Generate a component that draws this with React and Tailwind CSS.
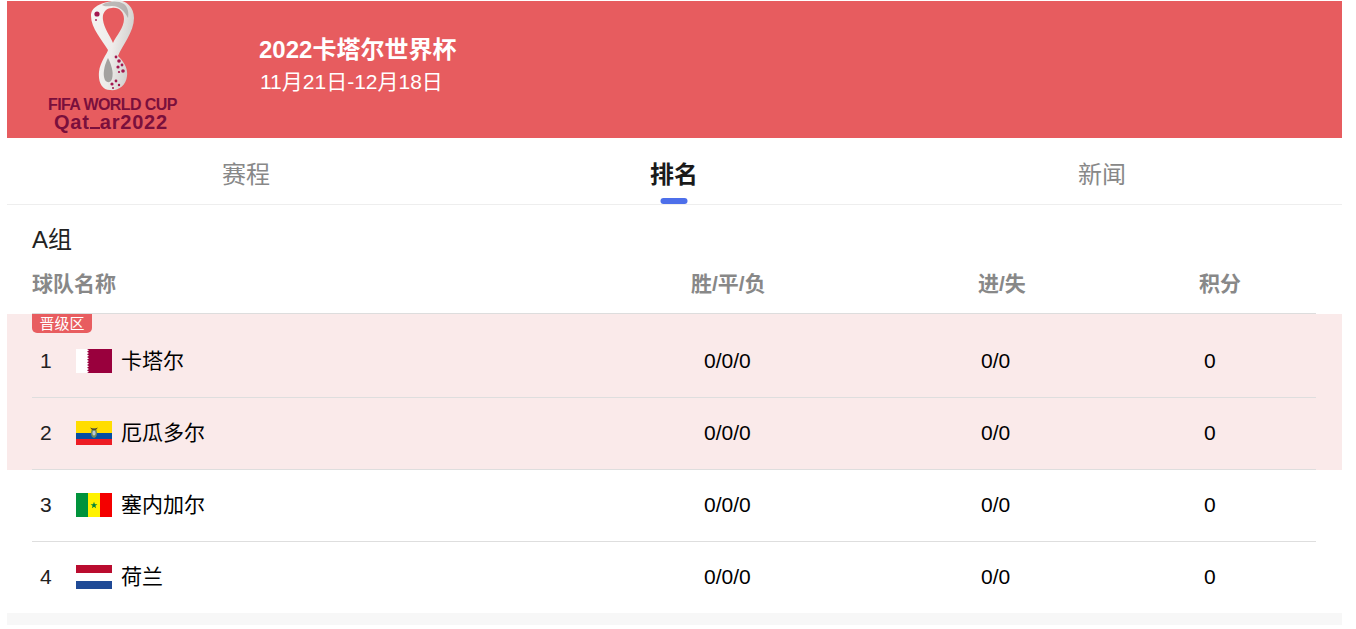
const teams = [
  { rank: 1, name: '卡塔尔', flag: 'qatar', zone: true },
  { rank: 2, name: '厄瓜多尔', flag: 'ecuador', zone: true },
  { rank: 3, name: '塞内加尔', flag: 'senegal' },
  { rank: 4, name: '荷兰', flag: 'netherlands' },
];

function Flag({ type }) {
  return (
    <svg width="36" height="24" viewBox="0 0 36 24" className="shrink-0">
      {type === 'qatar' && (
        <>
          <rect width="36" height="24" fill="#99003d" />
          <path d="M0 0H11L13 1.3L11 2.7L13 4L11 5.3L13 6.7L11 8L13 9.3L11 10.7L13 12L11 13.3L13 14.7L11 16L13 17.3L11 18.7L13 20L11 21.3L13 22.7L11 24H0Z" fill="#fff" />
        </>
      )}
      {type === 'ecuador' && (
        <>
          <rect width="36" height="12" fill="#ffdd00" />
          <rect y="12" width="36" height="6" fill="#034ea2" />
          <rect y="18" width="36" height="6" fill="#ed1c24" />
          <ellipse cx="18" cy="12" rx="3" ry="5" fill="#6f8a5a" />
          <ellipse cx="18" cy="12" rx="1.6" ry="2.6" fill="#b9c9d8" />
          <path d="M14 6.5L18 8L22 6.5L20 8.8H16Z" fill="#4a3b22" />
        </>
      )}
      {type === 'senegal' && (
        <>
          <rect width="12" height="24" fill="#00933c" />
          <rect x="12" width="12" height="24" fill="#fff200" />
          <rect x="24" width="12" height="24" fill="#f40000" />
          <path d="M18 8.8L18.9 11.2H21.4L19.4 12.8L20.1 15.2L18 13.8L15.9 15.2L16.6 12.8L14.6 11.2H17.1Z" fill="#00833a" />
        </>
      )}
      {type === 'netherlands' && (
        <>
          <rect width="36" height="8" fill="#ba0c2f" />
          <rect y="8" width="36" height="8" fill="#fff" />
          <rect y="16" width="36" height="8" fill="#1f4a96" />
        </>
      )}
    </svg>
  );
}

function Trophy() {
  return (
    <svg width="44" height="92" viewBox="91 0 44 92" className="block">
      <defs>
        <linearGradient id="band" x1="0" y1="0" x2="1" y2="0.3">
          <stop offset="0" stopColor="#f6f5f3" />
          <stop offset="0.6" stopColor="#eeecea" />
          <stop offset="1" stopColor="#d2d0ce" />
        </linearGradient>
      </defs>
      <path
        fillRule="evenodd"
        fill="url(#band)"
        d="M112 1C124 -2 134 6 134 18C134 32 122 46 118 56C124 62 128 68 127 76C126 86 118 91 110 90C102 90 98 82 99 72C100 62 107 54 108 50C102 40 91 28 91 16C91 6 102 3 112 1ZM112 8C105 8 102 14 103 20C104 28 110 36 113 43C116 36 124 28 124 19C124 12 119 7 112 8Z"
      />
      <path d="M102 5C107 1 118 0 124 4C128 7 129 13 128 18C125 12 120 6 112 6C108 6 105 7 102 5Z" fill="#8f8c8a" opacity="0.55" />
      <path d="M108 58C105 64 103 71 104 77C105 83 110 84 112 79C114 72 111 64 108 58Z" fill="#a3a19f" />
      <g fill="#a3174f">
        <circle cx="97" cy="14" r="2.6" />
        <circle cx="96" cy="20" r="0.9" />
        <circle cx="116" cy="57" r="1.4" />
        <circle cx="119" cy="61" r="1.8" />
        <circle cx="122" cy="65" r="1.4" />
        <circle cx="118" cy="67" r="1.6" />
        <circle cx="123" cy="71" r="1.8" />
        <circle cx="119" cy="72" r="1.1" />
        <circle cx="112" cy="84" r="1.6" />
        <circle cx="116" cy="81" r="1.4" />
        <circle cx="119" cy="85" r="1.2" />
        <circle cx="113" cy="88" r="1" />
      </g>
    </svg>
  );
}

function TeamRow({ team }) {
  const isFirst = team.rank === 1;
  const isLast = team.rank === 4;
  return (
    <div
      className={`relative grid grid-cols-[659px_287px_221px_1fr] items-center text-[21px] text-black ${
        isFirst ? 'h-[84px] pt-[12px]' : isLast ? 'h-[71px]' : 'h-[72px]'
      } ${isLast ? 'pb-px' : 'border-b border-[#dedede] pb-[2px]'}`}
    >
      {isFirst && (
        <span className="absolute left-0 top-0 flex h-[19px] w-[60px] items-center justify-center rounded-b-[5px] bg-[#e85d60] text-[15px] leading-none text-white">
          晋级区
        </span>
      )}
      <div className="flex items-center">
        <span className="w-[44px] pl-[8px] text-[#222]">{team.rank}</span>
        <Flag type={team.flag} />
        <span className="ml-[9px]">{team.name}</span>
      </div>
      <span className="pl-[13px]">0/0/0</span>
      <span className="pl-[3px]">0/0</span>
      <span className="pl-[5px]">0</span>
    </div>
  );
}

export default function App() {
  const zoneTeams = teams.filter((t) => t.zone);
  const otherTeams = teams.filter((t) => !t.zone);

  return (
    <div className="h-[629px] overflow-hidden bg-white pl-[7px] pt-px [font-family:'Liberation_Sans','Noto_Sans_CJK_SC',sans-serif]">
      <div className="w-[1335px]">
        {/* Bandeau */}
        <header className="flex h-[137px] bg-[#e75c5f] text-white">
          <div className="flex w-[253px] shrink-0 flex-col pl-[41px] text-[#7a0f3c]">
            <div className="ml-[43px] mt-[-1px]">
              <Trophy />
            </div>
            <div className="mt-[5px] whitespace-nowrap text-[16px] font-bold leading-[16px] tracking-[-0.6px]">FIFA WORLD CUP</div>
            <div className="ml-[6px] flex items-end whitespace-nowrap text-[20px] font-bold leading-[19px] tracking-[0.8px]">
              Qat
              <span className="mb-[3px] h-[2px] w-[10px] bg-[#7a0f3c]" />
              ar2022
            </div>
          </div>
          <div className="pt-[31px]">
            <div className="ml-[-1px] text-[24px] font-bold leading-[36px]">2022卡塔尔世界杯</div>
            <div className="text-[21px] leading-[28px]">11月21日-12月18日</div>
          </div>
        </header>

        {/* Onglets */}
        <nav className="grid h-[67px] grid-cols-3 border-b border-[#eeeeee] pl-[25px] pr-[26px] pt-[8px] text-[24px] text-[#888888]">
          <div className="flex items-center justify-center">赛程</div>
          <div className="relative flex items-center justify-center font-bold text-[#1a1a1a]">
            排名
            <span className="absolute bottom-0 left-1/2 h-[6px] w-[27px] -translate-x-1/2 rounded-full bg-[#4d6fea]" />
          </div>
          <div className="flex items-center justify-center">新闻</div>
        </nav>

        <div className="h-[56px] px-[25px] pt-[21px] text-[24px] leading-[28px] text-[#222]">A组</div>

        <div className="ml-[25px] mr-[26px] grid h-[53px] grid-cols-[659px_287px_221px_1fr] items-center border-b border-[#dddddd] pb-[7px] text-[21px] font-bold text-[#888888]">
          <span>球队名称</span>
          <span>胜/平/负</span>
          <span>进/失</span>
          <span>积分</span>
        </div>

        <div className="bg-[#faeaea] pl-[25px] pr-[26px]">
          {zoneTeams.map((team) => (
            <TeamRow key={team.rank} team={team} />
          ))}
        </div>
        <div className="pl-[25px] pr-[26px]">
          {otherTeams.map((team) => (
            <TeamRow key={team.rank} team={team} />
          ))}
        </div>

        <div className="h-[12px] bg-[#f7f7f7]" />
      </div>
    </div>
  );
}
